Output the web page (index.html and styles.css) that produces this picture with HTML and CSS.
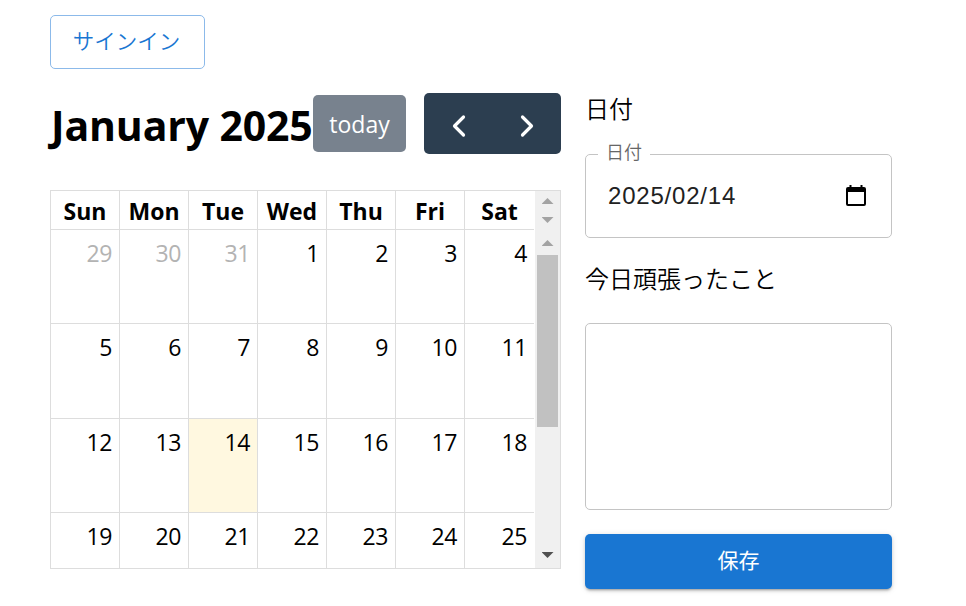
FILE: index.html
```html
<!DOCTYPE html>
<html lang="ja">
<head>
<meta charset="utf-8">
<title>カレンダー</title>
<link rel="stylesheet" href="styles.css">
</head>
<body>
<button class="signin">サインイン</button>
<main class="layout">
  <section class="calendar">
    <header class="toolbar">
      <h2 class="title">January 2025</h2>
      <button class="today">today</button>
      <div class="nav">
        <button class="arrow" aria-label="prev"><svg width="16" height="24" viewBox="0 0 16 24"><path d="M13.500 3 4.500 12l9 9"/></svg></button>
        <button class="arrow" aria-label="next"><svg width="16" height="24" viewBox="0 0 16 24"><path d="M3.500 3 12.500 12l-9 9"/></svg></button>
      </div>
    </header>
    <div class="grid">
      <div class="days">
        <div class="head">Sun</div><div class="head">Mon</div><div class="head">Tue</div><div class="head">Wed</div><div class="head">Thu</div><div class="head">Fri</div><div class="head">Sat</div>
        <div class="day other">29</div><div class="day other">30</div><div class="day other">31</div><div class="day">1</div><div class="day">2</div><div class="day">3</div><div class="day">4</div>
        <div class="day">5</div><div class="day">6</div><div class="day">7</div><div class="day">8</div><div class="day">9</div><div class="day">10</div><div class="day">11</div>
        <div class="day">12</div><div class="day">13</div><div class="day current">14</div><div class="day">15</div><div class="day">16</div><div class="day">17</div><div class="day">18</div>
        <div class="day last">19</div><div class="day last">20</div><div class="day last">21</div><div class="day last">22</div><div class="day last">23</div><div class="day last">24</div><div class="day last">25</div>
      </div>
      <div class="scroll">
        <div class="scroll-head"><i class="up"></i><i class="down"></i></div>
        <div class="scroll-body"><i class="up"></i><div class="thumb"></div><i class="down dark"></i></div>
      </div>
    </div>
  </section>
  <form class="form">
    <div class="label">日付</div>
    <fieldset class="date">
      <legend>日付</legend>
      <span class="value">2025/02/14</span>
      <svg class="icon" width="20" height="22" viewBox="0 0 20 22"><path fill-rule="evenodd" d="M3.500 0h2v2h9V0h2v2H18a2 2 0 0 1 2 2v15a2 2 0 0 1-2 2H2a2 2 0 0 1-2-2V4a2 2 0 0 1 2-2h1.500zM2 7v12h16V7z"/></svg>
    </fieldset>
    <div class="label second">今日頑張ったこと</div>
    <div class="textarea"></div>
    <button class="save" type="button">保存</button>
  </form>
</main>
</body>
</html>
```
FILE: styles.css
```css
* { box-sizing: border-box; }
body {
  margin: 0;
  padding: 15px 0 0 50px;
  height: 606px;
  overflow: hidden;
  background: #fff;
  color: #000;
  font-family: "Open Sans", "Noto Sans CJK JP", sans-serif;
}
button { font: inherit; border: 0; padding: 0; margin: 0; }
.signin {
  display: block;
  width: 155px;
  height: 54px;
  padding: 0 2px 5px 0;
  border: 1px solid #8cbaea;
  border-radius: 5px;
  background: #fff;
  color: #1976d2;
  font-family: "Noto Sans CJK JP", sans-serif;
  font-weight: 350;
  font-size: 21.5px;
}
.layout { display: flex; gap: 24px; margin-top: 24px; }
.calendar { width: 511px; }
.toolbar { display: flex; align-items: center; height: 61px; margin-bottom: 36px; }
.title {
  width: 263px;
  margin: 0;
  padding: 2px 0 0 1px;
  white-space: nowrap;
  font-size: 41px;
  line-height: 56px;
  font-weight: 700;
  letter-spacing: -0.15px;
}
.today {
  width: 93px;
  height: 57px;
  margin-right: 18px;
  border-radius: 5px;
  background: #78828e;
  color: #fff;
  font-size: 23px;
}
.nav { display: flex; width: 137px; height: 61px; border-radius: 5px; background: #2c3e50; }
.arrow { display: flex; align-items: center; justify-content: center; flex: 1; background: none; padding-top: 5px; }
.arrow svg { fill: none; stroke: #fff; stroke-width: 3.2; stroke-linecap: round; stroke-linejoin: round; }
.grid { display: flex; justify-content: space-between; height: 379px; border: 1px solid #ddd; }
.days {
  display: grid;
  grid-template-columns: repeat(7, 69px);
  grid-template-rows: 39px 94px 95px 94px 55px;
}
.head, .day { border-right: 1px solid #ddd; border-bottom: 1px solid #ddd; }
.head:nth-child(7n), .day:nth-child(7n) { border-right: 0; }
.head { text-align: center; font-weight: 700; font-size: 23px; line-height: 41px; }
.day { padding: 6px 7px 0 0; text-align: right; font-size: 23px; line-height: 34px; letter-spacing: -0.4px; }
.other { color: #b3b3b3; }
.current { background: #fff8e0; }
.last { border-bottom: 0; }
.scroll { display: flex; flex-direction: column; width: 25px; background: #f0f0f0; }
.scroll-head { height: 39px; display: flex; flex-direction: column; align-items: center; gap: 13px; padding-top: 7px; }
.scroll-body { flex: 1; display: flex; flex-direction: column; align-items: center; padding: 10px 0; }
.up, .down { width: 12px; height: 6px; background: #a3a3a3; }
.up { clip-path: polygon(50% 0, 100% 100%, 0 100%); }
.down { clip-path: polygon(0 0, 100% 0, 50% 100%); }
.thumb { width: 21px; height: 172px; margin-top: 9px; margin-bottom: auto; background: #c1c1c1; }
.dark { background: #505050; }
.form { width: 307px; }
.label {
  height: 61px;
  font-family: "Noto Sans CJK JP", sans-serif;
  font-weight: 350;
  font-size: 24px;
  line-height: 31px;
}
.form .label:first-child { height: 46px; line-height: 30px; }
.date {
  display: flex;
  align-items: center;
  justify-content: space-between;
  width: 307px;
  height: 99px;
  margin: 0;
  padding: 0 25px 15px 22px;
  border: 1px solid #c4c4c4;
  border-radius: 5px;
  font-family: "Liberation Sans", sans-serif;
  font-size: 24px;
  color: #212121;
}
.date legend {
  margin-left: -10px;
  padding: 0 8px 6px;
  color: #666;
  font-family: "Noto Sans CJK JP", sans-serif;
  font-weight: 350;
  font-size: 18px;
  line-height: 24px;
}
.value { letter-spacing: 0.8px; }
.icon { fill: #000; }
.second { margin-top: 24px; }
.textarea { height: 187px; border: 1px solid #c4c4c4; border-radius: 5px; }
.save {
  display: block;
  width: 307px;
  height: 55px;
  margin-top: 24px;
  padding-bottom: 6px;
  border-radius: 5px;
  background: #1976d2;
  color: #fff;
  font-family: "Noto Sans CJK JP", sans-serif;
  font-weight: 400;
  font-size: 21px;
  box-shadow: 0 3px 2px -2px rgba(0,0,0,.2), 0 2px 3px rgba(0,0,0,.14), 0 1px 6px rgba(0,0,0,.12);
}
```
